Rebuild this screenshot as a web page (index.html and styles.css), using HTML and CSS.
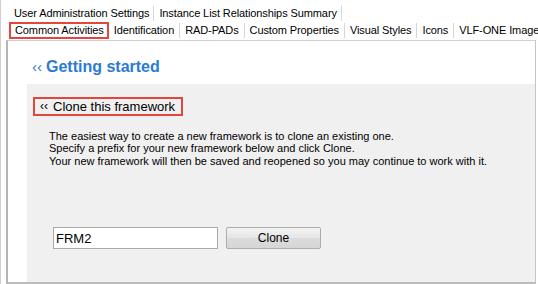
FILE: index.html
```html
<!DOCTYPE html>
<html>
<head>
<meta charset="utf-8">
<link rel="stylesheet" href="styles.css">
</head>
<body>
<div class="frame">
  <div class="tabs">
    <div class="tabrow">
      <span class="tab">User Administration Settings</span>
      <span class="tab">Instance List Relationships Summary</span>
    </div>
    <div class="tabrow row2">
      <span class="tab active">Common Activities</span>
      <span class="tab">Identification</span>
      <span class="tab">RAD-PADs</span>
      <span class="tab">Custom Properties</span>
      <span class="tab">Visual Styles</span>
      <span class="tab">Icons</span>
      <span class="tab">VLF-ONE Images</span>
    </div>
  </div>
  <div class="panel">
    <div class="title"><span class="chev">‹‹</span>Getting started</div>
    <div class="box">
      <div class="subtitle"><span class="chev-s">‹‹</span>Clone this framework</div>
      <p class="intro">The easiest way to create a new framework is to clone an existing one.<br>Specify a prefix for your new framework below and click Clone.<br>Your new framework will then be saved and reopened so you may continue to work with it.</p>
      <div class="form">
        <input class="prefix" type="text" value="FRM2">
        <button class="btn" type="button">Clone</button>
      </div>
    </div>
  </div>
</div>
</body>
</html>
```
FILE: styles.css
```css
html, body {
  margin: 0;
  padding: 0;
}
body {
  width: 538px;
  height: 284px;
  overflow: hidden;
  background: #ffffff;
  font-family: "Liberation Sans", Arial, sans-serif;
  color: #000;
}
.frame {
  height: 284px;
  box-sizing: border-box;
  border-left: 1px solid #cfcfcf;
  display: flex;
  flex-direction: column;
}
.tabs {
  padding: 5px 0 0 8px;
  font-size: 11px;
  letter-spacing: -0.1px;
  white-space: nowrap;
  overflow: hidden;
}
.tabrow {
  display: flex;
  height: 17px;
  align-items: center;
}
.tab {
  padding: 0 4px 0 5px;
  border-right: 1px solid #d6d6d6;
  line-height: 15px;
}
.row2 .tab {
  padding: 0 5px 0 5px;
}
.row2 .tab.active {
  margin-left: 0;
  border: 2px solid #e2463d;
  padding: 0 3px 0 4px;
  line-height: 13px;
}
.panel {
  flex: 1;
  margin: 1px 2px 0 5px;
  border-left: 2px solid #b4b4b4;
  border-top: 1px solid #d0d0d0;
  border-right: 1px solid #c4c4c4;
  border-bottom: 2px solid #bcbcbc;
  display: flex;
  flex-direction: column;
  padding-left: 19px;
}
.title {
  height: 43px;
  box-sizing: border-box;
  padding: 16px 0 0 5px;
  font-size: 16px;
  line-height: 20px;
  font-weight: bold;
  color: #2b7bd3;
}
.chev {
  font-weight: normal;
  font-size: 15px;
  margin-right: 4px;
}
.box {
  flex: 1;
  background: #f0f0f0;
  padding: 12px 0 0 6px;
}
.subtitle {
  display: inline-flex;
  align-items: center;
  height: 19px;
  box-sizing: border-box;
  border: 2px solid #e2463d;
  padding: 0 6px 0 5px;
  font-size: 13px;
}
.chev-s {
  font-size: 12px;
  margin-right: 5px;
}
.intro {
  margin: 14px 0 0 16px;
  font-size: 11px;
  line-height: 12.5px;
}
.form {
  display: flex;
  gap: 8px;
  margin: 60px 0 0 20px;
}
.prefix {
  width: 165px;
  height: 22px;
  box-sizing: border-box;
  border: 1px solid #a9a9a9;
  padding: 0 2px;
  font-family: "Liberation Sans", Arial, sans-serif;
  font-size: 13px;
  background: #fff;
  margin: 0;
}
.btn {
  width: 95px;
  height: 22px;
  box-sizing: border-box;
  border: 1px solid #acacac;
  border-radius: 2px;
  background: linear-gradient(#f3f3f3, #e6e6e6 50%, #dcdcdc 51%, #d6d6d6);
  font-family: "Liberation Sans", Arial, sans-serif;
  font-size: 12px;
  color: #000;
  margin: 0;
  padding: 0;
}
```
